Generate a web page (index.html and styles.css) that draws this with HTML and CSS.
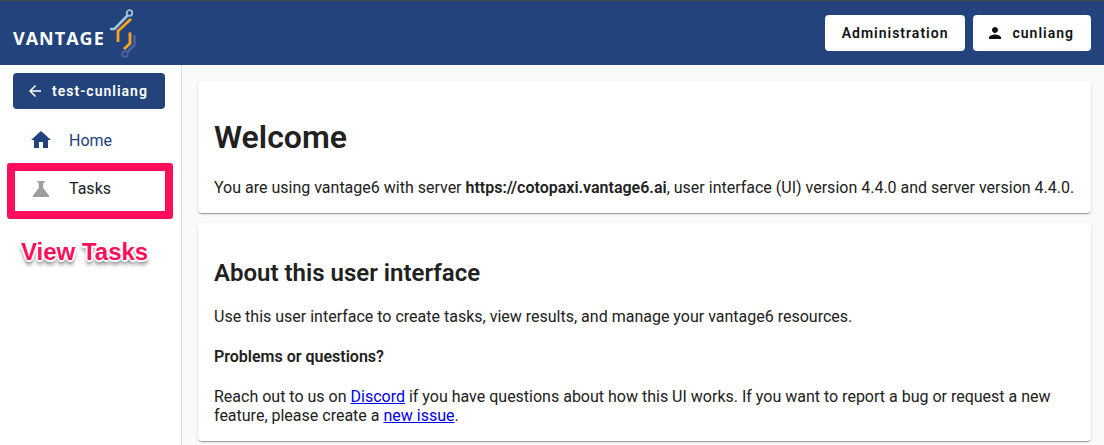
FILE: index.html
```html
<!DOCTYPE html>
<html lang="en">
<head>
<meta charset="utf-8">
<title>Vantage6</title>
<link rel="stylesheet" href="styles.css">
</head>
<body>
<header class="topbar">
  <a class="brand" href="#" aria-label="Vantage6 home">
    <span class="brand-name">VANTAGE</span>
    <svg class="brand-mark" viewBox="0 0 30 50" fill="none" aria-hidden="true">
      <path d="M1 21h4.500L18.500 7.500" stroke="#a5c3d5" stroke-width="2.600"/>
      <circle cx="20.500" cy="5" r="2.800" stroke="#a5c3d5" stroke-width="1.800"/>
      <path d="M9 34V23L22 11" stroke="#f9a61a" stroke-width="2.800"/>
      <path d="M21 24.500v11l-6 5.500" stroke="#f9a61a" stroke-width="2.800"/>
      <path d="M25.500 27v10l-7 7" stroke="#4f5da3" stroke-width="2.600"/>
      <circle cx="16" cy="46" r="2.800" stroke="#4f5da3" stroke-width="1.800"/>
    </svg>
  </a>
  <div class="actions">
    <button class="button" type="button">Administration</button>
    <button class="button" type="button">
      <svg class="button-icon" viewBox="0 0 24 24" fill="currentColor" aria-hidden="true"><path d="M12 12c2.210 0 4-1.790 4-4s-1.790-4-4-4-4 1.790-4 4 1.790 4 4 4zm0 2c-2.670 0-8 1.340-8 4v2h16v-2c0-2.660-5.330-4-8-4z"/></svg>
      cunliang
    </button>
  </div>
</header>
<div class="shell">
  <nav class="sidebar">
    <button class="button button-primary" type="button">
      <svg class="button-icon" viewBox="0 0 24 24" fill="currentColor" aria-hidden="true"><path d="M20 11H7.830l5.590-5.590L12 4l-8 8 8 8 1.410-1.410L7.830 13H20v-2z"/></svg>
      test-cunliang
    </button>
    <div class="nav-list">
      <a class="nav-item nav-item-active" href="#">
        <svg class="nav-icon" viewBox="0 0 24 24" fill="currentColor" aria-hidden="true"><path d="M10 20v-6h4v6h5v-8h3L12 3 2 12h3v8z"/></svg>
        Home
      </a>
      <a class="nav-item nav-item-marked" href="#">
        <svg class="nav-icon nav-icon-muted" viewBox="0 0 24 24" fill="currentColor" aria-hidden="true"><path d="M8.500 4h7v1.700H14.200V11L20 18.500V20H4v-1.500L9.800 11V5.700H8.500z"/></svg>
        Tasks
      </a>
    </div>
    <p class="callout">View Tasks</p>
  </nav>
  <main class="content">
    <section class="card">
      <h1>Welcome</h1>
      <p>You are using vantage6 with server <strong>https://cotopaxi.vantage6.ai</strong>, user interface (UI) version 4.4.0 and server version 4.4.0.</p>
    </section>
    <section class="card">
      <h2>About this user interface</h2>
      <p>Use this user interface to create tasks, view results, and manage your vantage6 resources.</p>
      <h3>Problems or questions?</h3>
      <p>Reach out to us on <a href="#">Discord</a> if you have questions about how this UI works. If you want to report a bug or request a new feature, please create a <a href="#">new issue</a>.</p>
    </section>
  </main>
</div>
</body>
</html>
```

FILE: styles.css
```css
* {
  box-sizing: border-box;
}

body {
  margin: 0;
  min-height: 100vh;
  display: flex;
  flex-direction: column;
  background: #fafafa;
  color: #212121;
  font: 16px/19px Roboto, sans-serif;
}

.topbar {
  display: flex;
  align-items: center;
  justify-content: space-between;
  height: 65px;
  padding: 0 13px;
  border-top: 1px solid #48484a;
  background: #22437b;
}

.brand {
  display: flex;
  align-items: center;
  gap: 4px;
  color: #fff;
  text-decoration: none;
}

.brand-name {
  padding-top: 10px;
  font: 700 18px/20px "Open Sans", sans-serif;
  letter-spacing: 1px;
}

.brand-mark {
  width: 30px;
  height: 50px;
}

.actions {
  display: flex;
  gap: 8px;
}

.button {
  display: flex;
  align-items: center;
  justify-content: center;
  gap: 8px;
  height: 36px;
  padding: 0 17px;
  border: 0;
  border-radius: 4px;
  background: #fff;
  color: #111;
  font: 600 14px/20px Roboto, sans-serif;
  letter-spacing: 1px;
}

.button-primary {
  width: 100%;
  background: #22437b;
  color: #fff;
}

.button-icon {
  width: 18px;
  height: 18px;
  margin-left: -4px;
}

.shell {
  flex: 1;
  display: flex;
}

.sidebar {
  flex: 0 0 182px;
  padding: 8px 16px 8px 13px;
  border-right: 1px solid #dedede;
  background: #fff;
}

.nav-list {
  margin: 8px -8px 0 -6px;
}

.nav-item {
  display: flex;
  align-items: center;
  gap: 16px;
  height: 46px;
  padding-left: 22px;
  color: #212121;
  text-decoration: none;
}

.nav-item-active {
  color: #22437b;
}

.nav-item-marked {
  height: 56px;
  padding: 0 0 5px 14px;
  border: 8px solid #ff0f5b;
  border-radius: 3px;
}

.nav-icon {
  width: 24px;
  height: 24px;
}

.nav-icon-muted {
  color: #9e9e9e;
}

.callout {
  margin: 17px 0 0 8px;
  color: #ff0f5b;
  font: bold 24px/32px "Liberation Sans", Arial, sans-serif;
  white-space: nowrap;
  text-shadow: 2px 0 #fff, -2px 0 #fff, 0 2px #fff, 0 -2px #fff, 1px 1px #fff, -1px 1px #fff, 0 4px 4px rgba(0, 0, 0, 0.7);
}

.content {
  flex: 1;
  min-width: 0;
  display: flex;
  flex-direction: column;
  gap: 10px;
  padding: 16px 13px 4px 16px;
}

.card {
  padding: 0 16px 16px;
  border-radius: 4px;
  background: #fff;
  box-shadow: 0 2px 1px -1px rgba(0, 0, 0, 0.2), 0 1px 1px rgba(0, 0, 0, 0.14), 0 1px 3px rgba(0, 0, 0, 0.12);
}

.card h1 {
  margin: 37px 0 22px;
  font-size: 32px;
  line-height: 38px;
}

.card h2 {
  margin: 36px 0 20px;
  font-size: 24px;
  line-height: 28px;
}

.card h3 {
  margin: 21px 0;
  font-size: 16px;
  line-height: 19px;
}

.card p {
  margin: 0;
}

.card a {
  color: #0000ee;
}

.card h1,
.card h2,
.card h3,
.card strong {
  font-weight: 600;
}
```
